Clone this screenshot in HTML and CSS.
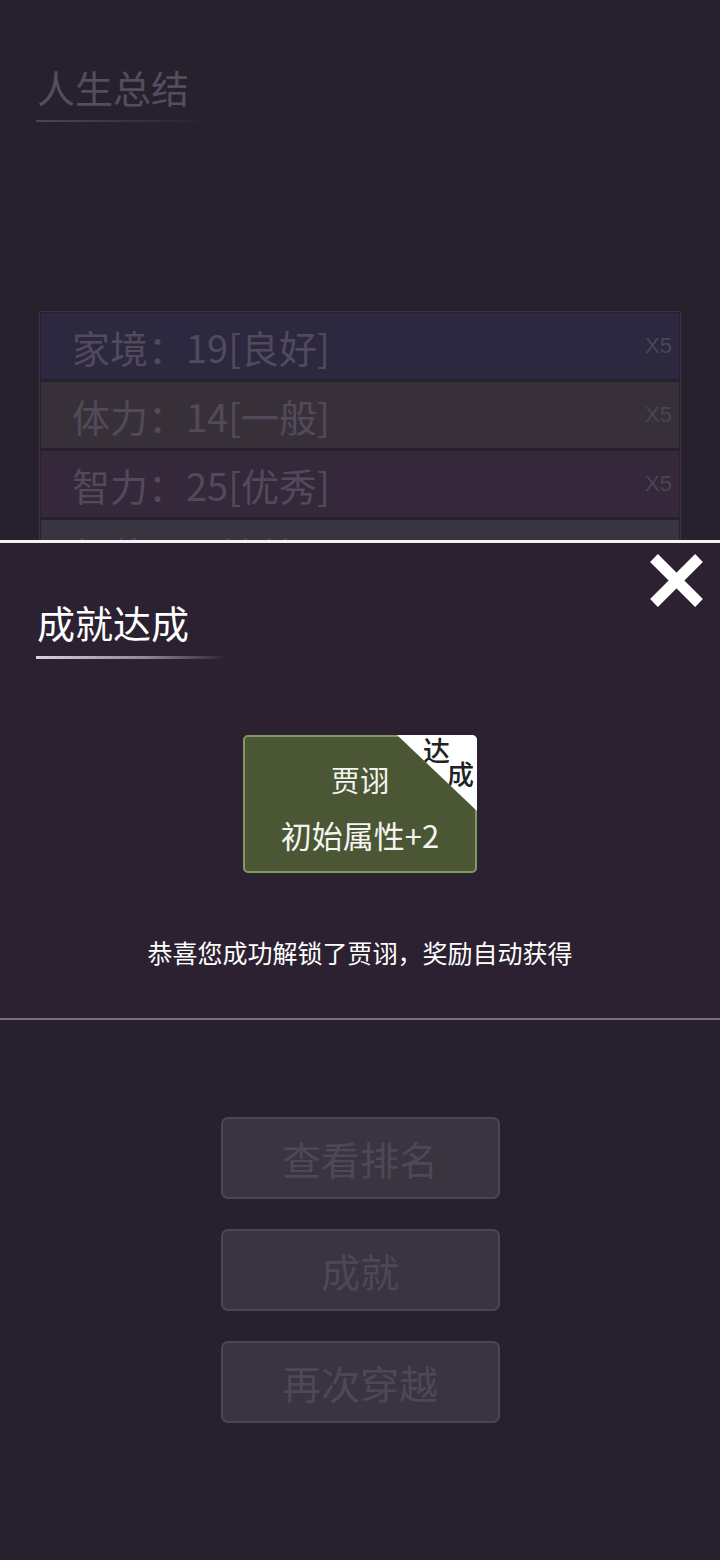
FILE: index.html
```html
<!DOCTYPE html>
<html lang="zh-CN">
<head>
  <meta charset="UTF-8">
  <meta name="viewport" content="width=device-width, initial-scale=1.0">
  <title>人生总结</title>
  <link rel="stylesheet" href="styles.css">
</head>
<body>
  <div class="page">
    <h1 class="page-title">人生总结</h1>
    <div class="title-line"></div>

    <ul class="stats">
      <li class="stat stat-family"><span>家境：19[良好]</span><span class="stat-mult">X5</span></li>
      <li class="stat stat-body"><span>体力：14[一般]</span><span class="stat-mult">X5</span></li>
      <li class="stat stat-mind"><span>智力：25[优秀]</span><span class="stat-mult">X5</span></li>
      <li class="stat stat-look"><span>颜值：8[较差]</span><span class="stat-mult">X5</span></li>
    </ul>

    <div class="actions">
      <button class="btn">查看排名</button>
      <button class="btn">成就</button>
      <button class="btn">再次穿越</button>
    </div>
  </div>

  <div class="dialog">
    <svg class="dialog-close" width="57" height="55" viewBox="0 0 57 55">
      <path d="M6 5 L51 50 M51 5 L6 50" stroke="#fff" stroke-width="11" fill="none"/>
    </svg>
    <h2 class="dialog-title">成就达成</h2>
    <div class="dialog-line"></div>

    <div class="achieve-card">
      <div class="achieve-badge">
        <span class="badge-a">达</span>
        <span class="badge-b">成</span>
      </div>
      <div class="achieve-name">贾诩</div>
      <div class="achieve-reward">初始属性+2</div>
    </div>

    <p class="dialog-msg">恭喜您成功解锁了贾诩，奖励自动获得</p>
  </div>
</body>
</html>
```

FILE: styles.css
```css
body {
  margin: 0;
  background-color: #27212d;
  font-family: "Noto Sans CJK SC", "Noto Sans", sans-serif;
}
.page {
  height: 1560px;
  display: flex;
  flex-direction: column;
  box-sizing: border-box;
  padding-bottom: 137px;
}
.page-title {
  margin: 65px 0 0 37px;
  font-size: 38px;
  font-weight: normal;
  line-height: 44px;
  color: #554d5d;
}
.title-line {
  width: 175px;
  height: 2px;
  margin: 11px 0 0 36px;
  background: linear-gradient(90deg, #4d4555, rgba(77, 69, 85, 0));
}
.stats {
  list-style: none;
  margin: 189px 39px 0;
  padding: 1px;
  border: 1px solid #3e2e4b;
  display: flex;
  flex-direction: column;
  gap: 3px;
}
.stat {
  height: 66px;
  display: flex;
  align-items: center;
  justify-content: space-between;
  padding: 0 7px 0 31px;
  font-size: 38px;
  color: #524a5b;
}
.stat-family { background-color: #2b2840; }
.stat-body { background-color: #383039; }
.stat-mind { background-color: #35283a; }
.stat-look { background-color: #3a3440; }
.stat-mult {
  font-family: "Liberation Sans", sans-serif;
  font-size: 22px;
  color: #4a4555;
}
.actions {
  margin-top: auto;
  display: flex;
  flex-direction: column;
  align-items: center;
  gap: 30px;
}
.btn {
  width: 279px;
  height: 82px;
  box-sizing: border-box;
  border: 2px solid #4b4453;
  border-radius: 7px;
  background-color: #3a3340;
  color: #4e4756;
  font-family: inherit;
  font-size: 39px;
  padding: 0;
}

/* popup over the summary */
.dialog {
  position: absolute;
  top: 540px;
  left: 0;
  width: 720px;
  height: 480px;
  box-sizing: border-box;
  border-top: 3px solid #f2f2f2;
  border-bottom: 2px solid #78727f;
  background-color: #2c2131;
  display: flex;
  flex-direction: column;
  align-items: center;
}
.dialog-close {
  position: absolute;
  top: 10px;
  right: 15px;
}
.dialog-title {
  align-self: flex-start;
  margin: 57px 0 0 37px;
  font-size: 38px;
  font-weight: normal;
  line-height: 44px;
  color: #ffffff;
}
.dialog-line {
  align-self: flex-start;
  width: 190px;
  height: 3px;
  margin: 12px 0 0 36px;
  background: linear-gradient(90deg, #d8d4dc, #8c8494 60%, rgba(44, 33, 49, 0));
}
.achieve-card {
  position: relative;
  width: 234px;
  height: 138px;
  box-sizing: border-box;
  margin-top: 76px;
  border: 2px solid #7e9a5d;
  border-radius: 5px;
  background-color: #4a5634;
  color: #f4f4f0;
  text-align: center;
}
.achieve-badge {
  position: absolute;
  top: -2px;
  right: -2px;
  width: 80px;
  height: 76px;
  background-color: #ffffff;
  clip-path: polygon(0 0, 100% 0, 100% 100%);
  border-top-right-radius: 5px;
  color: #222222;
  font-size: 27px;
  font-weight: 500;
  line-height: 27px;
}
.badge-a {
  position: absolute;
  top: 1px;
  left: 26px;
}
.badge-b {
  position: absolute;
  top: 25px;
  left: 50px;
}
.achieve-name {
  margin-top: 24px;
  font-size: 29px;
  line-height: 36px;
}
.achieve-reward {
  margin-top: 19px;
  font-size: 31px;
  line-height: 38px;
}
.dialog-msg {
  margin: 64px 0 0;
  font-size: 25px;
  line-height: 30px;
  color: #ffffff;
}
```
